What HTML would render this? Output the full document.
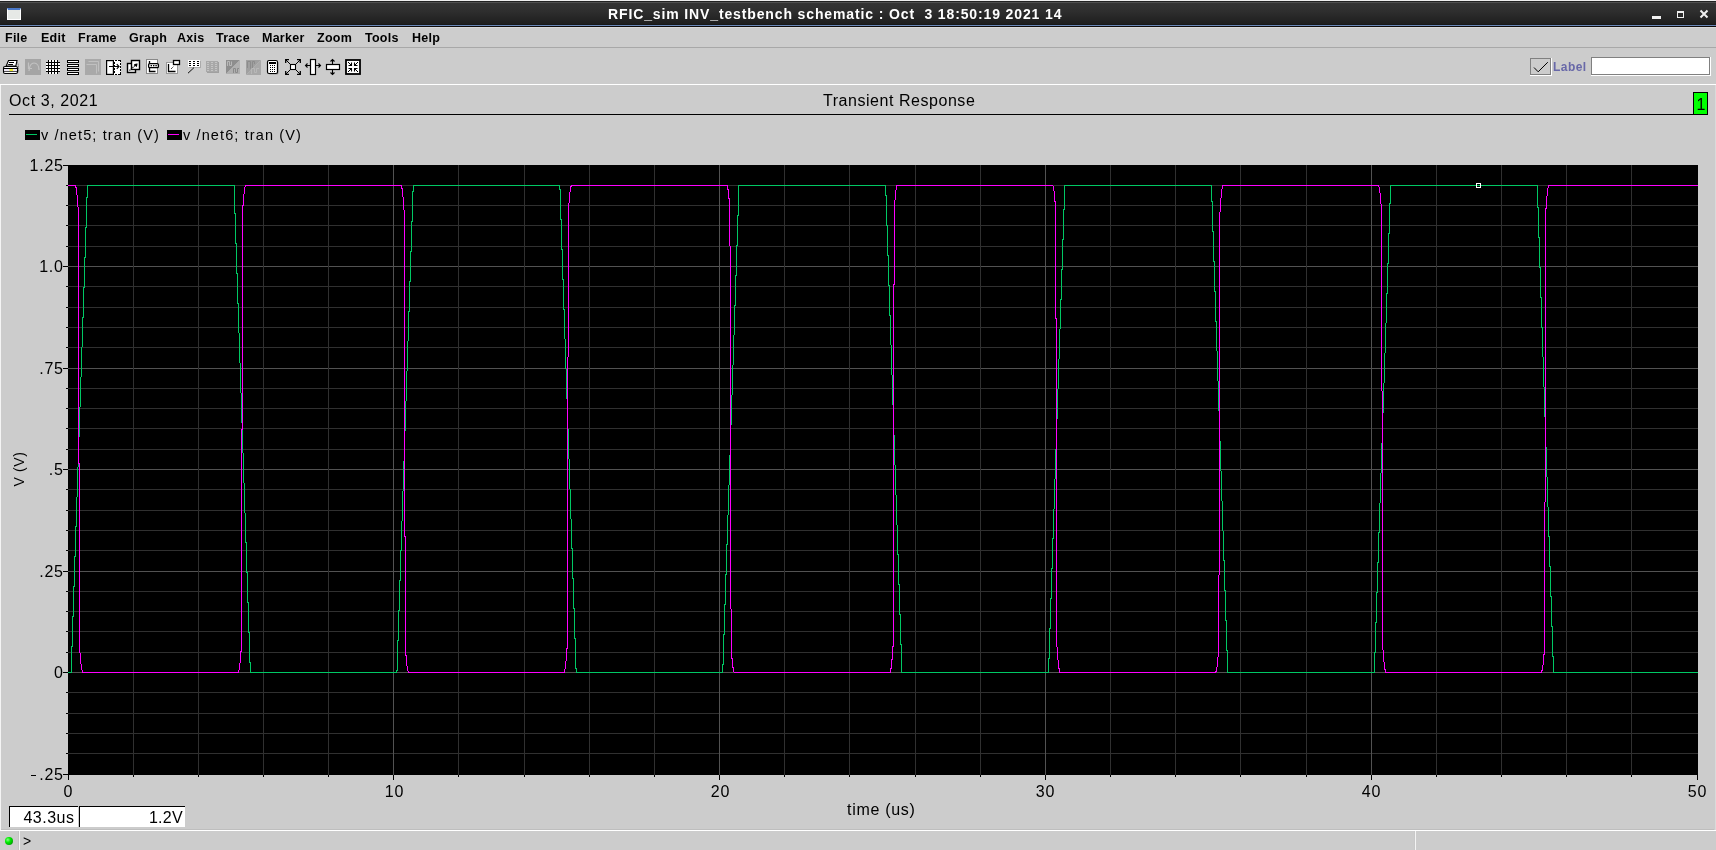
<!DOCTYPE html>
<html><head><meta charset="utf-8"><style>
*{margin:0;padding:0;box-sizing:border-box}
html,body{width:1716px;height:850px;overflow:hidden;background:#cccccc;font-family:'Liberation Sans', sans-serif;}
.a{position:absolute;white-space:pre;line-height:1}
#root{position:absolute;left:0;top:0;width:1716px;height:850px;will-change:transform}
</style></head>
<body><div id="root">
<div class="a" style="left:0;top:0;width:1716px;height:1px;background:#eeeeee"></div>
<div class="a" style="left:0;top:1px;width:1716px;height:1px;background:#222222"></div>
<div class="a" style="left:0;top:2px;width:1716px;height:1px;background:#505050"></div>
<div class="a" style="left:0;top:3px;width:1716px;height:21px;background:linear-gradient(#343434,#2e2e2e 40%,#1e1e1e)"></div>
<div class="a" style="left:0;top:24px;width:1716px;height:1px;background:#171717"></div>
<div class="a" style="left:0;top:25px;width:1716px;height:1px;background:#6a88b8"></div>
<div class="a" style="left:0;top:26px;width:1716px;height:1px;background:#100c0c"></div>
<div class="a" style="left:7px;top:8px;width:14px;height:12px;background:#e6e9e6;border:1px solid #fff;border-top:2px solid #4a78c8"></div>
<div class="a" style="left:608px;top:6px;font:bold 14px 'Liberation Sans', sans-serif;color:#fff;letter-spacing:0.87px">RFIC_sim INV_testbench schematic : Oct&nbsp; 3 18:50:19 2021 14</div>
<div class="a" style="left:1652px;top:15.5px;width:9px;height:3px;background:#f0f0f0"></div>
<div class="a" style="left:1677px;top:11px;width:7px;height:7px;border:1px solid #f0f0f0;border-top-width:2px"></div>
<svg class="a" style="left:1699px;top:9px" width="10" height="10"><path d="M1.5 1.5L8.5 8.5M8.5 1.5L1.5 8.5" stroke="#f0f0f0" stroke-width="2"/></svg>
<div class="a" style="left:0;top:27px;width:1716px;height:20px;background:#cdcdcd"></div>
<div class="a" style="left:0;top:27px;width:1716px;height:1px;background:#dadada"></div>
<div class="a" style="left:0;top:47px;width:1716px;height:1px;background:#a8a8a8"></div>
<div class="a" style="left:5px;top:31px;font:bold 12.5px 'Liberation Sans', sans-serif;color:#000;letter-spacing:0.25px">File</div>
<div class="a" style="left:41px;top:31px;font:bold 12.5px 'Liberation Sans', sans-serif;color:#000;letter-spacing:0.25px">Edit</div>
<div class="a" style="left:78px;top:31px;font:bold 12.5px 'Liberation Sans', sans-serif;color:#000;letter-spacing:0.25px">Frame</div>
<div class="a" style="left:129px;top:31px;font:bold 12.5px 'Liberation Sans', sans-serif;color:#000;letter-spacing:0.25px">Graph</div>
<div class="a" style="left:177px;top:31px;font:bold 12.5px 'Liberation Sans', sans-serif;color:#000;letter-spacing:0.25px">Axis</div>
<div class="a" style="left:216px;top:31px;font:bold 12.5px 'Liberation Sans', sans-serif;color:#000;letter-spacing:0.25px">Trace</div>
<div class="a" style="left:262px;top:31px;font:bold 12.5px 'Liberation Sans', sans-serif;color:#000;letter-spacing:0.25px">Marker</div>
<div class="a" style="left:317px;top:31px;font:bold 12.5px 'Liberation Sans', sans-serif;color:#000;letter-spacing:0.25px">Zoom</div>
<div class="a" style="left:365px;top:31px;font:bold 12.5px 'Liberation Sans', sans-serif;color:#000;letter-spacing:0.25px">Tools</div>
<div class="a" style="left:412px;top:31px;font:bold 12.5px 'Liberation Sans', sans-serif;color:#000;letter-spacing:0.25px">Help</div>
<div class="a" style="left:0;top:84px;width:1716px;height:1px;background:#ffffff"></div>
<div class="a" style="left:0;top:85px;width:1px;height:745px;background:#f4f4f4"></div>
<div class="a" style="left:1715px;top:85px;width:1px;height:745px;background:#dadada"></div>
<div class="a" style="left:0;top:830px;width:1716px;height:1px;background:#ffffff"></div>
<div class="a" style="left:1px;top:829px;width:1713px;height:1px;background:#bebebe"></div>
<div class="a" style="left:9px;top:92px;font:16px 'Liberation Sans', sans-serif;color:#000;letter-spacing:0.6px">Oct 3, 2021</div>
<div class="a" style="left:823px;top:91.5px;font:16px 'Liberation Sans', sans-serif;color:#000;letter-spacing:0.54px">Transient Response</div>
<div class="a" style="left:9px;top:114px;width:1684px;height:1px;background:#000"></div>
<div class="a" style="left:1693px;top:92px;width:15px;height:23px;background:#00ff00;border:1px solid #000"></div>
<div class="a" style="left:1696.5px;top:96px;font:16px 'Liberation Sans', sans-serif;color:#000">1</div>
<div class="a" style="left:25px;top:130px;width:15px;height:10px;background:#000"></div>
<div class="a" style="left:26px;top:134px;width:11px;height:1px;background:#00c864"></div>
<div class="a" style="left:41px;top:127px;font:14.5px 'Liberation Sans', sans-serif;color:#000;letter-spacing:1.12px">v /net5; tran (V)</div>
<div class="a" style="left:167px;top:130px;width:15px;height:10px;background:#000"></div>
<div class="a" style="left:168px;top:134px;width:11px;height:1px;background:#ff00ff"></div>
<div class="a" style="left:183px;top:127px;font:14.5px 'Liberation Sans', sans-serif;color:#000;letter-spacing:1.12px">v /net6; tran (V)</div>
<div class="a" style="right:1652.2px;top:157px;font:16px 'Liberation Sans', sans-serif;color:#000;letter-spacing:0.8px">1.25</div>
<div class="a" style="right:1652.2px;top:258px;font:16px 'Liberation Sans', sans-serif;color:#000;letter-spacing:0.8px">1.0</div>
<div class="a" style="right:1652.2px;top:360px;font:16px 'Liberation Sans', sans-serif;color:#000;letter-spacing:0.8px">.75</div>
<div class="a" style="right:1652.2px;top:461px;font:16px 'Liberation Sans', sans-serif;color:#000;letter-spacing:0.8px">.5</div>
<div class="a" style="right:1652.2px;top:563px;font:16px 'Liberation Sans', sans-serif;color:#000;letter-spacing:0.8px">.25</div>
<div class="a" style="right:1652.2px;top:664px;font:16px 'Liberation Sans', sans-serif;color:#000;letter-spacing:0.8px">0</div>
<div class="a" style="right:1652.2px;top:766px;font:16px 'Liberation Sans', sans-serif;color:#000;letter-spacing:0.8px">.25</div>
<div class="a" style="left:31px;top:775px;width:5px;height:1px;background:#000"></div>
<div class="a" style="left:28.4px;width:80px;text-align:center;top:782.5px;font:16px 'Liberation Sans', sans-serif;color:#000;letter-spacing:0.8px">0</div>
<div class="a" style="left:354.4px;width:80px;text-align:center;top:782.5px;font:16px 'Liberation Sans', sans-serif;color:#000;letter-spacing:0.8px">10</div>
<div class="a" style="left:680.4px;width:80px;text-align:center;top:782.5px;font:16px 'Liberation Sans', sans-serif;color:#000;letter-spacing:0.8px">20</div>
<div class="a" style="left:1005.4px;width:80px;text-align:center;top:782.5px;font:16px 'Liberation Sans', sans-serif;color:#000;letter-spacing:0.8px">30</div>
<div class="a" style="left:1331.4px;width:80px;text-align:center;top:782.5px;font:16px 'Liberation Sans', sans-serif;color:#000;letter-spacing:0.8px">40</div>
<div class="a" style="left:1657.4px;width:80px;text-align:center;top:782.5px;font:16px 'Liberation Sans', sans-serif;color:#000;letter-spacing:0.8px">50</div>
<div class="a" style="left:847px;top:801px;font:16px 'Liberation Sans', sans-serif;color:#000;letter-spacing:0.7px">time (us)</div>
<div class="a" style="left:0px;top:462px;width:40px;text-align:center;font:14px 'Liberation Sans', sans-serif;color:#000;letter-spacing:0.6px;transform:translate(-1px,-1px) rotate(-90deg)">V (V)</div>
<div class="a" style="left:9px;top:806px;width:69px;height:21px;background:#fff;border-top:1px solid #000;border-left:1px solid #000"></div>
<div class="a" style="left:79px;top:806px;width:106px;height:21px;background:#fff;border-top:1px solid #000;border-left:1px solid #000"></div>
<div class="a" style="right:1641.5px;top:809px;font:16px 'Liberation Sans', sans-serif;color:#000;letter-spacing:0.5px">43.3us</div>
<div class="a" style="right:1533px;top:809px;font:16px 'Liberation Sans', sans-serif;color:#000;letter-spacing:0.3px">1.2V</div>
<div class="a" style="left:18px;top:831px;width:1px;height:19px;background:#c2c2c2"></div>
<div class="a" style="left:19px;top:831px;width:1px;height:19px;background:#f4f4f4"></div>
<div class="a" style="left:1414px;top:831px;width:1px;height:19px;background:#c8c8c8"></div>
<div class="a" style="left:1415px;top:831px;width:1px;height:19px;background:#f4f4f4"></div>
<div class="a" style="left:5px;top:837px;width:8px;height:8px;border-radius:50%;background:radial-gradient(circle at 35% 35%,#8f8 0,#0e0 35%,#070 100%)"></div>
<div class="a" style="left:23px;top:832.5px;font:14px 'Liberation Sans', sans-serif;color:#000">&gt;</div>
<div class="a" style="left:1530px;top:58px;width:22px;height:18px;border-right:1px solid #fff;border-bottom:1px solid #fff"></div>
<div class="a" style="left:1530px;top:58px;width:21px;height:17px;border:1px solid #808080"></div>
<svg class="a" style="left:1530px;top:58px" width="22" height="18"><path d="M4 9.5L8.2 13.8L17.8 4.2" fill="none" stroke="#000" stroke-width="1"/></svg>
<div class="a" style="left:1553px;top:60px;font:bold 12px 'Liberation Sans', sans-serif;color:#6868a8;letter-spacing:0.45px">Label</div>
<div class="a" style="left:1591px;top:57px;width:120px;height:19px;background:#fff;border-right:1px solid #fff;border-bottom:1px solid #fff"></div>
<div class="a" style="left:1591px;top:57px;width:119px;height:18px;background:#fff;border:1px solid #808080"></div>
<svg width="1716" height="850" style="position:absolute;left:0;top:0" shape-rendering="crispEdges">
<rect x="68" y="165" width="1630" height="610" fill="#000"/>
<rect x="68" y="185" width="1630" height="1" fill="#303030"/>
<rect x="68" y="205" width="1630" height="1" fill="#303030"/>
<rect x="68" y="225" width="1630" height="1" fill="#303030"/>
<rect x="68" y="246" width="1630" height="1" fill="#303030"/>
<rect x="68" y="266" width="1630" height="1" fill="#525252"/>
<rect x="68" y="286" width="1630" height="1" fill="#303030"/>
<rect x="68" y="307" width="1630" height="1" fill="#303030"/>
<rect x="68" y="327" width="1630" height="1" fill="#303030"/>
<rect x="68" y="347" width="1630" height="1" fill="#303030"/>
<rect x="68" y="368" width="1630" height="1" fill="#525252"/>
<rect x="68" y="388" width="1630" height="1" fill="#303030"/>
<rect x="68" y="408" width="1630" height="1" fill="#303030"/>
<rect x="68" y="428" width="1630" height="1" fill="#303030"/>
<rect x="68" y="449" width="1630" height="1" fill="#303030"/>
<rect x="68" y="469" width="1630" height="1" fill="#525252"/>
<rect x="68" y="489" width="1630" height="1" fill="#303030"/>
<rect x="68" y="510" width="1630" height="1" fill="#303030"/>
<rect x="68" y="530" width="1630" height="1" fill="#303030"/>
<rect x="68" y="550" width="1630" height="1" fill="#303030"/>
<rect x="68" y="571" width="1630" height="1" fill="#525252"/>
<rect x="68" y="591" width="1630" height="1" fill="#303030"/>
<rect x="68" y="611" width="1630" height="1" fill="#303030"/>
<rect x="68" y="631" width="1630" height="1" fill="#303030"/>
<rect x="68" y="652" width="1630" height="1" fill="#303030"/>
<rect x="68" y="672" width="1630" height="1" fill="#525252"/>
<rect x="68" y="692" width="1630" height="1" fill="#303030"/>
<rect x="68" y="713" width="1630" height="1" fill="#303030"/>
<rect x="68" y="733" width="1630" height="1" fill="#303030"/>
<rect x="68" y="753" width="1630" height="1" fill="#303030"/>
<rect x="133" y="165" width="1" height="610" fill="#303030"/>
<rect x="198" y="165" width="1" height="610" fill="#303030"/>
<rect x="263" y="165" width="1" height="610" fill="#303030"/>
<rect x="328" y="165" width="1" height="610" fill="#303030"/>
<rect x="393" y="165" width="1" height="610" fill="#525252"/>
<rect x="458" y="165" width="1" height="610" fill="#303030"/>
<rect x="524" y="165" width="1" height="610" fill="#303030"/>
<rect x="589" y="165" width="1" height="610" fill="#303030"/>
<rect x="654" y="165" width="1" height="610" fill="#303030"/>
<rect x="719" y="165" width="1" height="610" fill="#525252"/>
<rect x="784" y="165" width="1" height="610" fill="#303030"/>
<rect x="849" y="165" width="1" height="610" fill="#303030"/>
<rect x="915" y="165" width="1" height="610" fill="#303030"/>
<rect x="980" y="165" width="1" height="610" fill="#303030"/>
<rect x="1045" y="165" width="1" height="610" fill="#525252"/>
<rect x="1110" y="165" width="1" height="610" fill="#303030"/>
<rect x="1175" y="165" width="1" height="610" fill="#303030"/>
<rect x="1240" y="165" width="1" height="610" fill="#303030"/>
<rect x="1306" y="165" width="1" height="610" fill="#303030"/>
<rect x="1371" y="165" width="1" height="610" fill="#525252"/>
<rect x="1436" y="165" width="1" height="610" fill="#303030"/>
<rect x="1501" y="165" width="1" height="610" fill="#303030"/>
<rect x="1566" y="165" width="1" height="610" fill="#303030"/>
<rect x="1631" y="165" width="1" height="610" fill="#303030"/>
<rect x="63" y="165" width="5" height="1" fill="#000"/>
<rect x="66" y="185" width="2" height="1" fill="#000"/>
<rect x="66" y="205" width="2" height="1" fill="#000"/>
<rect x="66" y="225" width="2" height="1" fill="#000"/>
<rect x="66" y="246" width="2" height="1" fill="#000"/>
<rect x="63" y="266" width="5" height="1" fill="#000"/>
<rect x="66" y="286" width="2" height="1" fill="#000"/>
<rect x="66" y="307" width="2" height="1" fill="#000"/>
<rect x="66" y="327" width="2" height="1" fill="#000"/>
<rect x="66" y="347" width="2" height="1" fill="#000"/>
<rect x="63" y="368" width="5" height="1" fill="#000"/>
<rect x="66" y="388" width="2" height="1" fill="#000"/>
<rect x="66" y="408" width="2" height="1" fill="#000"/>
<rect x="66" y="428" width="2" height="1" fill="#000"/>
<rect x="66" y="449" width="2" height="1" fill="#000"/>
<rect x="63" y="469" width="5" height="1" fill="#000"/>
<rect x="66" y="489" width="2" height="1" fill="#000"/>
<rect x="66" y="510" width="2" height="1" fill="#000"/>
<rect x="66" y="530" width="2" height="1" fill="#000"/>
<rect x="66" y="550" width="2" height="1" fill="#000"/>
<rect x="63" y="571" width="5" height="1" fill="#000"/>
<rect x="66" y="591" width="2" height="1" fill="#000"/>
<rect x="66" y="611" width="2" height="1" fill="#000"/>
<rect x="66" y="631" width="2" height="1" fill="#000"/>
<rect x="66" y="652" width="2" height="1" fill="#000"/>
<rect x="63" y="672" width="5" height="1" fill="#000"/>
<rect x="66" y="692" width="2" height="1" fill="#000"/>
<rect x="66" y="713" width="2" height="1" fill="#000"/>
<rect x="66" y="733" width="2" height="1" fill="#000"/>
<rect x="66" y="753" width="2" height="1" fill="#000"/>
<rect x="63" y="774" width="5" height="1" fill="#000"/>
<rect x="68" y="775" width="1" height="5" fill="#000"/>
<rect x="133" y="775" width="1" height="2" fill="#000"/>
<rect x="198" y="775" width="1" height="2" fill="#000"/>
<rect x="263" y="775" width="1" height="2" fill="#000"/>
<rect x="328" y="775" width="1" height="2" fill="#000"/>
<rect x="393" y="775" width="1" height="5" fill="#000"/>
<rect x="458" y="775" width="1" height="2" fill="#000"/>
<rect x="524" y="775" width="1" height="2" fill="#000"/>
<rect x="589" y="775" width="1" height="2" fill="#000"/>
<rect x="654" y="775" width="1" height="2" fill="#000"/>
<rect x="719" y="775" width="1" height="5" fill="#000"/>
<rect x="784" y="775" width="1" height="2" fill="#000"/>
<rect x="849" y="775" width="1" height="2" fill="#000"/>
<rect x="915" y="775" width="1" height="2" fill="#000"/>
<rect x="980" y="775" width="1" height="2" fill="#000"/>
<rect x="1045" y="775" width="1" height="5" fill="#000"/>
<rect x="1110" y="775" width="1" height="2" fill="#000"/>
<rect x="1175" y="775" width="1" height="2" fill="#000"/>
<rect x="1240" y="775" width="1" height="2" fill="#000"/>
<rect x="1306" y="775" width="1" height="2" fill="#000"/>
<rect x="1371" y="775" width="1" height="5" fill="#000"/>
<rect x="1436" y="775" width="1" height="2" fill="#000"/>
<rect x="1501" y="775" width="1" height="2" fill="#000"/>
<rect x="1566" y="775" width="1" height="2" fill="#000"/>
<rect x="1631" y="775" width="1" height="2" fill="#000"/>
<rect x="1697" y="775" width="1" height="5" fill="#000"/>
<path fill="#00c864" d="M68 672h4v1h-4zM250 672h147v1h-147zM576 672h147v1h-147zM901 672h148v1h-148zM1227 672h148v1h-148zM1553 672h145v1h-145zM87 185h148v1h-148zM413 185h147v1h-147zM738 185h148v1h-148zM1064 185h148v1h-148zM1390 185h148v1h-148zM244 483h1v30h-1zM1056 419h1v30h-1zM76 497h1v30h-1zM1386 293h1v30h-1zM566 369h1v30h-1zM722 664h1v8h-1zM246 542h1v31h-1zM1225 590h1v31h-1zM1380 473h1v30h-1zM1052 538h1v31h-1zM562 249h1v31h-1zM1547 477h1v30h-1zM1539 237h1v31h-1zM1384 353h1v30h-1zM1227 650h1v22h-1zM242 423h1v30h-1zM1221 471h1v30h-1zM738 186h1v30h-1zM1219 411h1v30h-1zM1543 357h1v30h-1zM1050 598h1v31h-1zM238 303h1v30h-1zM412 191h1v31h-1zM84 257h1v31h-1zM1223 531h1v30h-1zM560 189h1v31h-1zM1215 291h1v31h-1zM78 437h1v30h-1zM736 245h1v31h-1zM408 311h1v30h-1zM570 489h1v30h-1zM74 556h1v31h-1zM402 491h1v30h-1zM886 195h1v31h-1zM574 608h1v31h-1zM1378 532h1v31h-1zM1551 596h1v31h-1zM888 255h1v31h-1zM1383 383h1v30h-1zM72 616h1v31h-1zM1382 413h1v30h-1zM568 429h1v30h-1zM1048 658h1v14h-1zM1376 592h1v31h-1zM564 309h1v30h-1zM1549 536h1v31h-1zM1541 297h1v31h-1zM407 341h1v30h-1zM404 431h1v30h-1zM734 305h1v30h-1zM1545 417h1v30h-1zM81 347h1v30h-1zM411 221h1v31h-1zM1537 186h1v22h-1zM1212 201h1v31h-1zM77 467h1v30h-1zM892 375h1v30h-1zM896 495h1v30h-1zM1374 652h1v20h-1zM1553 656h1v16h-1zM1379 503h1v30h-1zM890 315h1v30h-1zM243 453h1v30h-1zM572 548h1v31h-1zM1375 622h1v31h-1zM79 407h1v30h-1zM737 215h1v31h-1zM239 333h1v30h-1zM73 586h1v31h-1zM403 461h1v30h-1zM241 393h1v30h-1zM400 550h1v31h-1zM900 614h1v31h-1zM237 273h1v31h-1zM1216 321h1v30h-1zM1214 261h1v31h-1zM1381 443h1v30h-1zM1377 562h1v31h-1zM898 554h1v31h-1zM75 526h1v31h-1zM405 401h1v30h-1zM1063 209h1v31h-1zM565 339h1v30h-1zM894 435h1v30h-1zM410 251h1v31h-1zM71 646h1v26h-1zM561 219h1v31h-1zM406 371h1v30h-1zM249 632h1v31h-1zM733 335h1v30h-1zM1226 620h1v31h-1zM1542 327h1v30h-1zM399 580h1v31h-1zM245 513h1v30h-1zM1222 501h1v30h-1zM1538 207h1v31h-1zM1224 560h1v31h-1zM1218 381h1v30h-1zM731 395h1v30h-1zM1220 441h1v30h-1zM573 578h1v31h-1zM397 640h1v31h-1zM735 275h1v31h-1zM732 365h1v30h-1zM401 521h1v30h-1zM729 455h1v30h-1zM1546 447h1v30h-1zM1550 566h1v31h-1zM563 279h1v31h-1zM1548 507h1v30h-1zM87 186h1v12h-1zM1544 387h1v30h-1zM247 572h1v31h-1zM1540 267h1v31h-1zM1061 269h1v31h-1zM235 213h1v31h-1zM727 515h1v30h-1zM1062 239h1v31h-1zM575 638h1v31h-1zM398 610h1v31h-1zM728 485h1v30h-1zM885 186h1v10h-1zM1552 626h1v31h-1zM1387 263h1v31h-1zM1064 186h1v24h-1zM1058 359h1v30h-1zM730 425h1v30h-1zM1388 233h1v31h-1zM724 604h1v31h-1zM723 634h1v31h-1zM897 525h1v30h-1zM893 405h1v30h-1zM86 197h1v31h-1zM1390 186h1v18h-1zM1060 299h1v30h-1zM726 544h1v31h-1zM1054 479h1v30h-1zM85 227h1v31h-1zM569 459h1v30h-1zM1059 329h1v30h-1zM725 574h1v31h-1zM887 225h1v31h-1zM567 399h1v30h-1zM895 465h1v30h-1zM1385 323h1v30h-1zM1051 568h1v31h-1zM1389 203h1v31h-1zM891 345h1v30h-1zM571 519h1v30h-1zM1055 449h1v30h-1zM1049 628h1v31h-1zM889 285h1v31h-1zM83 287h1v31h-1zM80 377h1v30h-1zM899 584h1v31h-1zM236 243h1v31h-1zM1053 509h1v30h-1zM240 363h1v30h-1zM1057 389h1v30h-1zM1217 351h1v30h-1zM1213 231h1v31h-1zM901 644h1v28h-1zM409 281h1v31h-1zM248 602h1v31h-1zM413 186h1v6h-1zM234 186h1v28h-1zM82 317h1v30h-1zM250 662h1v10h-1zM1211 186h1v16h-1zM396 670h1v2h-1zM576 668h1v4h-1zM559 186h1v4h-1z"/>
<path fill="#ff00ff" d="M82 672h157v1h-157zM408 672h157v1h-157zM734 672h157v1h-157zM1059 672h157v1h-157zM1385 672h157v1h-157zM68 185h8v1h-8zM245 185h157v1h-157zM571 185h157v1h-157zM896 185h157v1h-157zM1222 185h157v1h-157zM1548 185h150v1h-150zM1056 318h1v329h-1zM893 284h1v363h-1zM404 210h1v327h-1zM1545 208h1v294h-1zM1382 391h1v259h-1zM241 429h1v223h-1zM730 246h1v363h-1zM1057 647h1v13h-1zM78 207h1v257h-1zM567 357h1v292h-1zM1544 502h1v153h-1zM79 463h1v190h-1zM1219 212h1v363h-1zM1542 665h1v6h-1zM568 203h1v154h-1zM1380 193h1v11h-1zM405 536h1v120h-1zM242 205h1v225h-1zM894 200h1v85h-1zM1381 204h1v187h-1zM1055 201h1v118h-1zM729 198h1v48h-1zM1541 670h1v2h-1zM406 655h1v11h-1zM244 187h1v7h-1zM1220 198h1v14h-1zM77 195h1v12h-1zM892 646h1v14h-1zM243 194h1v12h-1zM570 186h1v6h-1zM891 659h1v10h-1zM1218 575h1v82h-1zM731 609h1v50h-1zM403 197h1v13h-1zM238 670h1v2h-1zM1058 660h1v9h-1zM1217 657h1v10h-1zM1546 196h1v13h-1zM76 187h1v8h-1zM240 651h1v12h-1zM569 192h1v11h-1zM728 189h1v10h-1zM566 648h1v13h-1zM1383 650h1v12h-1zM895 190h1v10h-1zM733 667h1v5h-1zM1216 667h1v5h-1zM1543 654h1v11h-1zM1054 191h1v11h-1zM732 658h1v10h-1zM1221 189h1v9h-1zM1547 188h1v8h-1zM564 669h1v3h-1zM890 668h1v4h-1zM80 653h1v11h-1zM402 188h1v9h-1zM407 666h1v5h-1zM1384 662h1v8h-1zM896 186h1v4h-1zM1059 668h1v4h-1zM81 664h1v6h-1zM239 663h1v7h-1zM565 661h1v8h-1zM401 186h1v3h-1zM1222 186h1v3h-1zM82 670h1v2h-1zM1385 669h1v3h-1zM1379 187h1v6h-1zM75 186h1v2h-1zM727 186h1v4h-1zM1548 186h1v2h-1zM1053 186h1v5h-1zM408 671h1v1h-1zM245 186h1v1h-1zM1378 186h1v1h-1zM1215 671h1v1h-1zM571 186h1v1h-1z"/>
<rect x="1476.5" y="183.5" width="4" height="4" fill="none" stroke="#fff" stroke-width="1"/>
</svg>
<svg style="position:absolute;left:0;top:0" width="370" height="84">
<g fill="none" stroke="#000" stroke-width="1">
<!-- 1 printer -->
<path d="M8.5 60.5H17L15.8 66H6.2Z" fill="#fff" stroke-width="1.1"/>
<path d="M9 62.5H14M8.2 64.5H13"/>
<rect x="3.5" y="66.5" width="14" height="7" rx="1.5" fill="#fff" stroke-width="1.1"/>
<path d="M4 68.5H17M4 71.2H17"/>
<rect x="4" y="69" width="13" height="2" fill="#ece4f4" stroke="none"/>
<rect x="9.5" y="69.2" width="3.5" height="1.6" fill="#f0f000" stroke="none"/>
<path d="M17.5 62.5L18.5 65.5V72.5" stroke="#555" stroke-dasharray="1 1"/>
<!-- 2 undo disabled -->
<rect x="25" y="59" width="16" height="16" fill="#a5a5a5" stroke="none"/>
<path d="M29 71C29 65 32 63 34 63C37 63 39 66 39 70" stroke="#c2c2c2" stroke-width="1.2"/>
<path d="M28.5 62.5V68.5H32" stroke="#c2c2c2" stroke-width="1.2"/>
<!-- 3 grid -->
<rect x="46" y="60" width="14" height="14" fill="#fff" stroke="none"/>
<g shape-rendering="crispEdges" fill="#000" stroke="none">
<rect x="48" y="60" width="1" height="14"/><rect x="51" y="60" width="1" height="14"/><rect x="54" y="60" width="1" height="14"/><rect x="57" y="60" width="1" height="14"/>
<rect x="46" y="62" width="14" height="1"/><rect x="46" y="65" width="14" height="1"/><rect x="46" y="68" width="14" height="1"/><rect x="46" y="71" width="14" height="1"/>
</g>
<g fill="#ccc" stroke="none" shape-rendering="crispEdges">
<rect x="46" y="60" width="2" height="2"/><rect x="58" y="60" width="2" height="2"/>
<rect x="46" y="72" width="2" height="2"/><rect x="58" y="72" width="2" height="2"/>
</g>
<!-- 4 lines -->
<g shape-rendering="crispEdges" stroke="none">
<rect x="67" y="60" width="12" height="3" fill="#000"/><rect x="68" y="61" width="10" height="1" fill="#fff"/>
<rect x="67" y="64" width="12" height="3" fill="#000"/><rect x="68" y="65" width="10" height="1" fill="#fff"/>
<rect x="67" y="68" width="12" height="3" fill="#000"/><rect x="68" y="69" width="10" height="1" fill="#fff"/>
<rect x="67" y="72" width="12" height="3" fill="#000"/><rect x="68" y="73" width="10" height="1" fill="#fff"/>
</g>
<!-- 5 gray box disabled -->
<rect x="85" y="59" width="16" height="16" fill="#a9a9a9" stroke="none"/>
<path d="M88.5 61.5H98.5V71.5M86.5 64.5H96.5V73.5" stroke="#c0c0c0"/>
<!-- 6 split -->
<rect x="113" y="60" width="8" height="15" fill="#fff" stroke="none"/>
<g shape-rendering="crispEdges" fill="#000" stroke="none">
<rect x="115" y="60" width="2" height="1"/><rect x="118" y="60" width="2" height="1"/>
<rect x="115" y="74" width="2" height="1"/><rect x="118" y="74" width="2" height="1"/>
<rect x="120" y="60" width="1" height="2"/><rect x="120" y="63" width="1" height="2"/><rect x="120" y="66" width="1" height="2"/><rect x="120" y="69" width="1" height="2"/><rect x="120" y="72" width="1" height="3"/>
<rect x="114" y="62" width="1" height="2"/><rect x="114" y="65" width="1" height="2"/><rect x="114" y="68" width="1" height="2"/><rect x="114" y="71" width="1" height="2"/>
</g>
<rect x="106.6" y="60.6" width="6.8" height="13.8" fill="#fff" stroke-width="1.2"/>
<path d="M109 66.5H119M116.8 64.2L119 66.5L116.8 68.8" stroke-width="1.1"/>
<!-- 7 overlapping windows -->
<rect x="127.5" y="63.5" width="8" height="9" fill="#fff" stroke-width="1.4"/>
<rect x="131.5" y="60.5" width="8" height="9" fill="#fff" stroke-width="1.4"/>
<path d="M129.5 70.5L134.5 66" stroke-dasharray="1.2 0.8" stroke-width="1.1"/>
<path d="M137.6 63.4L133.8 64.2L136.8 67.2Z" fill="#000" stroke="none"/>
<path d="M134.5 66L136.5 64" stroke-width="1.2"/>
<!-- 8 window w/ dots -->
<rect x="146.5" y="59.5" width="11" height="14" fill="#fff" stroke="#888"/>
<path d="M149.5 61V71.5H155.5" stroke-width="1.3"/>
<rect x="148.6" y="63.6" width="9.8" height="4" rx="1.2" fill="#fff" stroke-width="1.3"/>
<g fill="#000" stroke="none"><rect x="150.6" y="65" width="1.4" height="1.3"/><rect x="153" y="65" width="1.4" height="1.3"/><rect x="155.4" y="65" width="1.4" height="1.3"/></g>
<!-- 9 box + small box -->
<rect x="166.5" y="62.5" width="11" height="11" fill="#fff" stroke="#999"/>
<path d="M168.5 64V71.5H175.5" stroke-width="1.3"/>
<path d="M171 69L174 66" stroke-dasharray="1 1"/>
<rect x="173.5" y="60.5" width="6" height="4" fill="#fff" stroke-width="1.3"/>
<!-- 10 dotted table w/ pen -->
<rect x="189" y="61" width="12" height="7" fill="#aaa" stroke="none"/>
<rect x="188" y="60" width="12" height="7" fill="#fff" stroke="none"/>
<g fill="#000" stroke="none" shape-rendering="crispEdges">
<rect x="189" y="61" width="2" height="1"/><rect x="193" y="61" width="2" height="1"/><rect x="197" y="61" width="2" height="1"/>
<rect x="189" y="63" width="2" height="1"/><rect x="193" y="63" width="2" height="1"/><rect x="197" y="63" width="2" height="1"/>
<rect x="189" y="65" width="2" height="1"/><rect x="193" y="65" width="2" height="1"/><rect x="197" y="65" width="2" height="1"/>
</g>
<path d="M188 73.2L194 67.6" stroke-width="0.95"/>
<!-- 11 gray table -->
<rect x="207" y="62" width="12" height="11" fill="#a0a0a0" stroke="none"/>
<rect x="206" y="61" width="12" height="11" fill="#a8a8a8" stroke="none"/>
<path d="M207 62.5H209M211 62.5H213M215 62.5H217M207 64.5H209M211 64.5H213M215 64.5H217M207 66.5H209M211 66.5H213M215 66.5H217M207 68.5H209M211 68.5H213M215 68.5H217M207 70.5H209M211 70.5H213M215 70.5H217" stroke="#c4c4c4"/>
<!-- 12 gray diagonal waveform -->
<path d="M226 60H240L226 74Z" fill="#8e8e8e" stroke="none"/>
<path d="M240 60V74H226Z" fill="#b0b0b0" stroke="none"/>
<path d="M227.5 66V61.5H229.5V65.5H231.5V61.5" stroke="#b8b8b8"/>
<path d="M233.5 73V68.5H235.5V72.5H237.5V68.5H239" stroke="#8a8a8a"/>
<!-- 13 gray waveform 2 -->
<path d="M246 60H261L246 75Z" fill="#a0a0a0" stroke="none"/>
<path d="M261 60V75H246Z" fill="#a8a8a8" stroke="none"/>
<path d="M247.5 68V61.5H250.5V68.5H252.5V61.5H254.5V64" stroke="#8c8c8c"/>
<path d="M251.5 74V68.5H254.5V72.5H256.5V68.5H259" stroke="#b8b8b8"/>
<!-- 14 calculator -->
<rect x="268.5" y="61.5" width="10" height="13" rx="1.5" fill="#999" stroke="none"/>
<rect x="267.5" y="60.5" width="10" height="13" rx="1.5" fill="#fff" stroke-width="1.2"/>
<g fill="#000" stroke="none" shape-rendering="crispEdges">
<rect x="269" y="62" width="7" height="2"/>
<rect x="270" y="65" width="1" height="1"/><rect x="272" y="65" width="1" height="1"/><rect x="274" y="65" width="1" height="1"/>
<rect x="270" y="67" width="1" height="1"/><rect x="272" y="67" width="1" height="1"/><rect x="274" y="67" width="1" height="1"/>
<rect x="270" y="69" width="1" height="1"/><rect x="272" y="69" width="1" height="1"/><rect x="274" y="69" width="1" height="1"/>
<rect x="270" y="71" width="1" height="1"/><rect x="272" y="71" width="1" height="1"/><rect x="274" y="71" width="1" height="1"/>
</g>
<!-- 15 zoom fit -->
<rect x="290.5" y="64.5" width="5" height="5" fill="#fff" stroke-width="1.1"/>
<path d="M290.5 64.5L286 60M295.5 64.5L300 60M290.5 69.5L286 74M295.5 69.5L300 74" stroke-width="1"/>
<path d="M285.7 63V59.7H289M300.3 63V59.7H297M285.7 71V74.3H289M300.3 71V74.3H297" stroke-width="1.3"/>
<!-- 16 h arrows -->
<rect x="310.5" y="59.5" width="5" height="15" fill="#fff" stroke-width="1.2"/>
<path d="M305.5 65.5H310M316 65.5H320.5M307.5 63.5L305.5 65.5L307.5 67.5M318.5 63.5L320.5 65.5L318.5 67.5" stroke-width="1.1"/>
<!-- 17 v arrows -->
<rect x="326.5" y="64.5" width="13" height="5" fill="#fff" stroke-width="1.2"/>
<path d="M332.5 59.5V64M332.5 70V74.5M330.5 61.5L332.5 59.5L334.5 61.5M330.5 72.5L332.5 74.5L334.5 72.5" stroke-width="1.1"/>
<!-- 18 inward box -->
<rect x="346" y="60" width="14" height="14" fill="#fff" stroke-width="1.8"/>
<path d="M348 62L351.5 65.5M358 62L354.5 65.5M348 72L351.5 68.5M358 72L354.5 68.5" stroke-width="1"/>
<path d="M348.5 65.5H351.5V62.5M357.5 65.5H354.5V62.5M348.5 68.5H351.5V71.5M357.5 68.5H354.5V71.5" stroke-width="1.1"/>
</g>
</svg>

</div></body></html>
